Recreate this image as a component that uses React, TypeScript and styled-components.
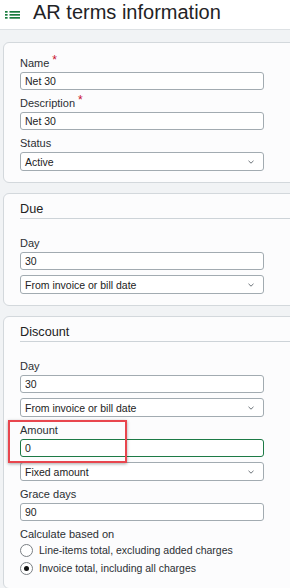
import React from 'react';
import styled, { createGlobalStyle } from 'styled-components';

const GlobalStyle = createGlobalStyle`
    html, body {
        margin: 0;
        padding: 0;
        background: #f1f3f5;
        overflow: hidden;
    }
    body {
        font-family: "Liberation Sans", Arial, sans-serif;
        color: #222;
    }
    * {
        box-sizing: border-box;
    }
`;

const Page = styled.div`
    width: 290px;
    height: 588px;
    overflow: hidden;
    background: #f1f3f5;
`;

const Header = styled.header`
    display: flex;
    align-items: flex-start;
    height: 30px;
    padding-left: 5px;
    background: #fff;
    border-bottom: 1px solid #dde1e4;
`;

const MenuIcon = styled.svg`
    margin-top: 10px;
    flex-shrink: 0;
`;

const Title = styled.h1`
    margin: 0 0 0 13px;
    font-size: 20px;
    line-height: 24px;
    font-weight: 400;
    color: #1f2326;
    white-space: nowrap;
`;

const Main = styled.main`
    display: flex;
    flex-direction: column;
    gap: 10px;
    padding: 12px 0 0 3px;
`;

const Card = styled.section<{ $titled?: boolean }>`
    width: 310px;
    background: #fcfcfd;
    border: 1px solid #d3d8dc;
    border-radius: 6px;
    padding: ${p => (p.$titled ? '7px' : '14px')} 0 11px 16px;
`;

const CardTitle = styled.h2`
    height: 18px;
    margin: 0 0 18px 0;
    font-size: 12.7px;
    line-height: 16px;
    font-weight: 400;
    color: #222;
    border-bottom: 1px solid #cdd3d8;
`;

const Field = styled.div`
    position: relative;
    display: flex;
    flex-direction: column;
    width: 244px;
    & + & {
        margin-top: 7px;
    }
`;

const Label = styled.div<{ $tight?: boolean }>`
    height: 13px;
    font-size: 11px;
    line-height: 13px;
    color: #2b2f33;
    margin-bottom: ${p => (p.$tight ? '0' : '2px')};
    white-space: nowrap;
`;

const Star = styled.span`
    position: relative;
    top: -3px;
    margin-left: 3px;
    color: #c8102e;
    font-size: 12px;
    line-height: 0;
`;

const TextInput = styled.input<{ $focused?: boolean }>`
    display: block;
    width: 244px;
    height: 18px;
    margin: 0;
    padding: 0 4px;
    font-family: "Liberation Sans", Arial, sans-serif;
    font-size: 10.5px;
    color: #222;
    background: #fff;
    border: 1px solid ${p => (p.$focused ? '#1d7a46' : '#a2abb1')};
    border-radius: 3px;
    outline: none;
`;

const SelectBox = styled.div<{ $stacked?: boolean }>`
    display: flex;
    align-items: center;
    justify-content: space-between;
    width: 244px;
    height: 19px;
    margin-top: ${p => (p.$stacked ? '5px' : '0')};
    padding: 0 9px 0 4px;
    font-size: 10.5px;
    line-height: 12px;
    color: #222;
    background: #fff;
    border: 1px solid #a2abb1;
    border-radius: 3px;
`;

const Highlight = styled.div`
    position: absolute;
    top: -4px;
    left: -12px;
    width: 119px;
    height: 43px;
    border: 2.5px solid #e8464e;
    box-shadow: 0 1px 3px rgba(0, 0, 0, 0.35);
    pointer-events: none;
`;

const RadioRow = styled.div`
    display: flex;
    align-items: center;
    height: 18px;
    font-size: 10.5px;
    line-height: 12px;
    color: #2b2f33;
`;

const RadioDot = styled.span<{ $checked?: boolean }>`
    display: flex;
    align-items: center;
    justify-content: center;
    width: 13px;
    height: 13px;
    margin-right: 6px;
    border: 1px solid #7a7f84;
    border-radius: 50%;
    background: #fff;
    &::after {
        content: '';
        display: ${p => (p.$checked ? 'block' : 'none')};
        width: 5px;
        height: 5px;
        border-radius: 50%;
        background: #111;
    }
`;

const Chevron = () => (
    <svg width="6" height="4" viewBox="0 0 6 4">
        <path d="M0.5 0.8 L3 3.2 L5.5 0.8" fill="none" stroke="#6b7278" strokeWidth="1" />
    </svg>
);

const Select = ({ value, stacked }: { value: string; stacked?: boolean }) => (
    <SelectBox $stacked={stacked}>
        <span>{value}</span>
        <Chevron />
    </SelectBox>
);

const App = () => {
    return (
        <Page>
            <GlobalStyle />
            <Header>
                <MenuIcon width="15" height="9" viewBox="0 0 15 9">
                    <g fill="#1a7d3f">
                        <rect x="0" y="1" width="2.6" height="1.7" />
                        <rect x="4.5" y="1" width="10.5" height="1.7" />
                        <rect x="0" y="4" width="2.6" height="1.7" />
                        <rect x="4.5" y="4" width="10.5" height="1.7" />
                        <rect x="0" y="7" width="2.6" height="1.7" />
                        <rect x="4.5" y="7" width="10.5" height="1.7" />
                    </g>
                </MenuIcon>
                <Title>AR terms information</Title>
            </Header>

            <Main>
                <Card>
                    <Field>
                        <Label>Name<Star>*</Star></Label>
                        <TextInput defaultValue="Net 30" />
                    </Field>
                    <Field>
                        <Label>Description<Star>*</Star></Label>
                        <TextInput defaultValue="Net 30" />
                    </Field>
                    <Field>
                        <Label>Status</Label>
                        <Select value="Active" />
                    </Field>
                </Card>

                <Card $titled>
                    <CardTitle>Due</CardTitle>
                    <Field>
                        <Label>Day</Label>
                        <TextInput defaultValue="30" />
                        <Select value="From invoice or bill date" stacked />
                    </Field>
                </Card>

                <Card $titled>
                    <CardTitle>Discount</CardTitle>
                    <Field>
                        <Label>Day</Label>
                        <TextInput defaultValue="30" />
                        <Select value="From invoice or bill date" stacked />
                    </Field>
                    <Field>
                        <Highlight />
                        <Label>Amount</Label>
                        <TextInput defaultValue="0" $focused />
                        <Select value="Fixed amount" stacked />
                    </Field>
                    <Field>
                        <Label>Grace days</Label>
                        <TextInput defaultValue="90" />
                    </Field>
                    <Field>
                        <Label $tight>Calculate based on</Label>
                        <RadioRow>
                            <RadioDot />
                            Line-items total, excluding added charges
                        </RadioRow>
                        <RadioRow>
                            <RadioDot $checked />
                            Invoice total, including all charges
                        </RadioRow>
                    </Field>
                </Card>
            </Main>
        </Page>
    );
};

export default App;
